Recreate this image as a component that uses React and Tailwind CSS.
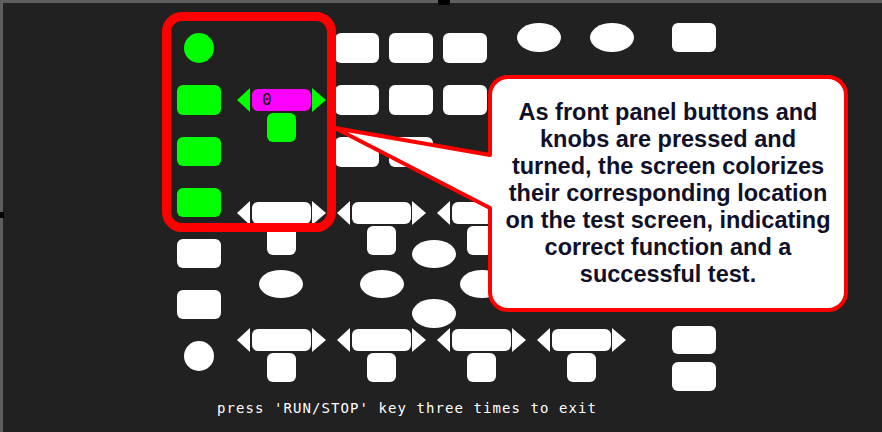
import React from "react";

// pixel-ish triangle used for knob arrows
const Arrow = ({ dir, color, w = 13 }) => (
  <svg width={w} height="24" viewBox={`0 0 ${w} 24`} className="block shrink-0">
    {dir === "left" ? (
      <polygon points={`0,12 ${w},0 ${w},24`} fill={color} />
    ) : (
      <polygon points={`0,0 ${w},12 0,24`} fill={color} />
    )}
  </svg>
);

const Knob = ({ lit, value }) => (
  <div className="flex w-[89px] shrink-0 flex-col items-center gap-[1px]">
    <div className="flex items-center">
      <Arrow dir="left" color={lit ? "#00ff00" : "#ffffff"} />
      <div
        className={
          lit
            ? "ml-[2px] flex h-[22px] w-[59px] items-center rounded-[6px] bg-[#ff00ff] pl-[10px]"
            : "ml-[2px] flex h-[22px] w-[59px] items-center rounded-[6px] bg-white pl-[10px]"
        }
      >
        {value != null && (
          <span className="font-['DejaVu_Sans_Mono',monospace] text-[16px] leading-none text-black">{value}</span>
        )}
      </div>
      <div className="ml-[1px]">
        <Arrow dir="right" w={14} color={lit ? "#00ff00" : "#ffffff"} />
      </div>
    </div>
    <div className={lit ? "h-[29px] w-[29px] rounded-[6px] bg-[#00ff00]" : "h-[29px] w-[29px] rounded-[6px] bg-white"} />
  </div>
);

const Key = ({ className = "" }) => <div className={"w-[44px] shrink-0 rounded-[6px] " + className} />;
const Oval = ({ className = "" }) => <div className={"w-[44px] shrink-0 rounded-[50%] bg-white " + className} />;

export default function App() {
  return (
    <div className="relative h-[432px] w-[882px] border-l-[3px] border-t-[3px] border-[#5e5e5e] bg-[#212121]">
      <div className="flex items-start pl-[174px] pt-[20px]">
        {/* left column of buttons */}
        <div className="mt-[10px] flex w-[44px] flex-col items-center gap-[22px]">
          <div className="h-[30px] w-[30px] rounded-full bg-[#00ff00]" />
          <Key className="h-[30px] bg-[#00ff00]" />
          <Key className="h-[29px] bg-[#00ff00]" />
          <Key className="h-[29px] bg-[#00ff00]" />
          <Key className="h-[29px] bg-white" />
          <Key className="h-[29px] bg-white" />
          <div className="h-[30px] w-[30px] rounded-full bg-white" />
        </div>

        <div className="ml-[16px] flex flex-col">
          {/* top section */}
          <div className="flex items-start">
            <div className="mt-[65px]">
              <Knob lit value="0" />
            </div>
            <div className="ml-[9px] mt-[10px] grid grid-cols-[repeat(3,44px)] gap-x-[10px] gap-y-[22px]">
              {Array.from({ length: 8 }).map((_, i) => (
                <Key key={i} className="h-[30px] bg-white" />
              ))}
            </div>
            <Oval className="ml-[30px] h-[29px]" />
            <Oval className="ml-[29px] h-[29px]" />
            <Key className="ml-[38px] h-[29px] bg-white" />
          </div>

          {/* knob row */}
          <div className="mt-[34px] flex gap-[11px]">
            <Knob />
            <Knob />
            <Knob />
            <Knob />
          </div>

          {/* oval cluster */}
          <div className="-mt-[15px] flex flex-col">
            <Oval className="ml-[175px] h-[28px]" />
            <div className="mt-[2px] flex">
              <Oval className="ml-[22px] h-[28px]" />
              <Oval className="ml-[57px] h-[28px]" />
              <Oval className="ml-[56px] h-[28px]" />
            </div>
            <Oval className="ml-[175px] mt-[1px] h-[29px]" />
          </div>

          {/* bottom knob row */}
          <div className="flex items-start">
            <div className="flex gap-[11px]">
              <Knob />
              <Knob />
              <Knob />
              <Knob />
            </div>
            <div className="-mt-[2px] ml-[46px] flex flex-col gap-[8px]">
              <Key className="h-[28px] bg-white" />
              <Key className="h-[29px] bg-white" />
            </div>
          </div>
        </div>
      </div>

      <p className="ml-[214px] mt-[9px] font-['DejaVu_Sans_Mono',monospace] text-[14px] leading-[16px] tracking-[1.07px] text-white">
        press 'RUN/STOP' key three times to exit
      </p>

      {/* small marks on the frame edge */}
      <div className="absolute left-[435px] top-[-3px] h-[5px] w-[12px] bg-black" />
      <div className="absolute left-[-3px] top-[209px] h-[6px] w-[4px] bg-black" />

      {/* red highlight frame */}
      <div className="absolute left-[159px] top-[9px] h-[220px] w-[174px] rounded-[20px] border-[9px] border-[#ff0000]" />

      {/* callout */}
      <svg className="absolute left-[327px] top-[67px]" width="525" height="250" viewBox="0 0 525 250">
        <path
          d="M178 7 H498 A18 18 0 0 1 516 25 V222 A18 18 0 0 1 498 240 H178 A18 18 0 0 1 160 222 V138 L5 58 L160 85 V25 A18 18 0 0 1 178 7 Z"
          fill="#ffffff"
          stroke="#ff0000"
          strokeWidth="4"
          strokeLinejoin="round"
        />
      </svg>
      <div className="absolute left-[485px] top-[72px] flex h-[237px] w-[360px] items-center justify-center text-center font-['Liberation_Sans',Arial,sans-serif] text-[23.5px] font-bold leading-[27px] text-[#101028]">
        <p>
          As front panel buttons and
          <br />
          knobs are pressed and
          <br />
          turned, the screen colorizes
          <br />
          their corresponding location
          <br />
          on the test screen, indicating
          <br />
          correct function and a
          <br />
          successful test.
        </p>
      </div>
    </div>
  );
}
